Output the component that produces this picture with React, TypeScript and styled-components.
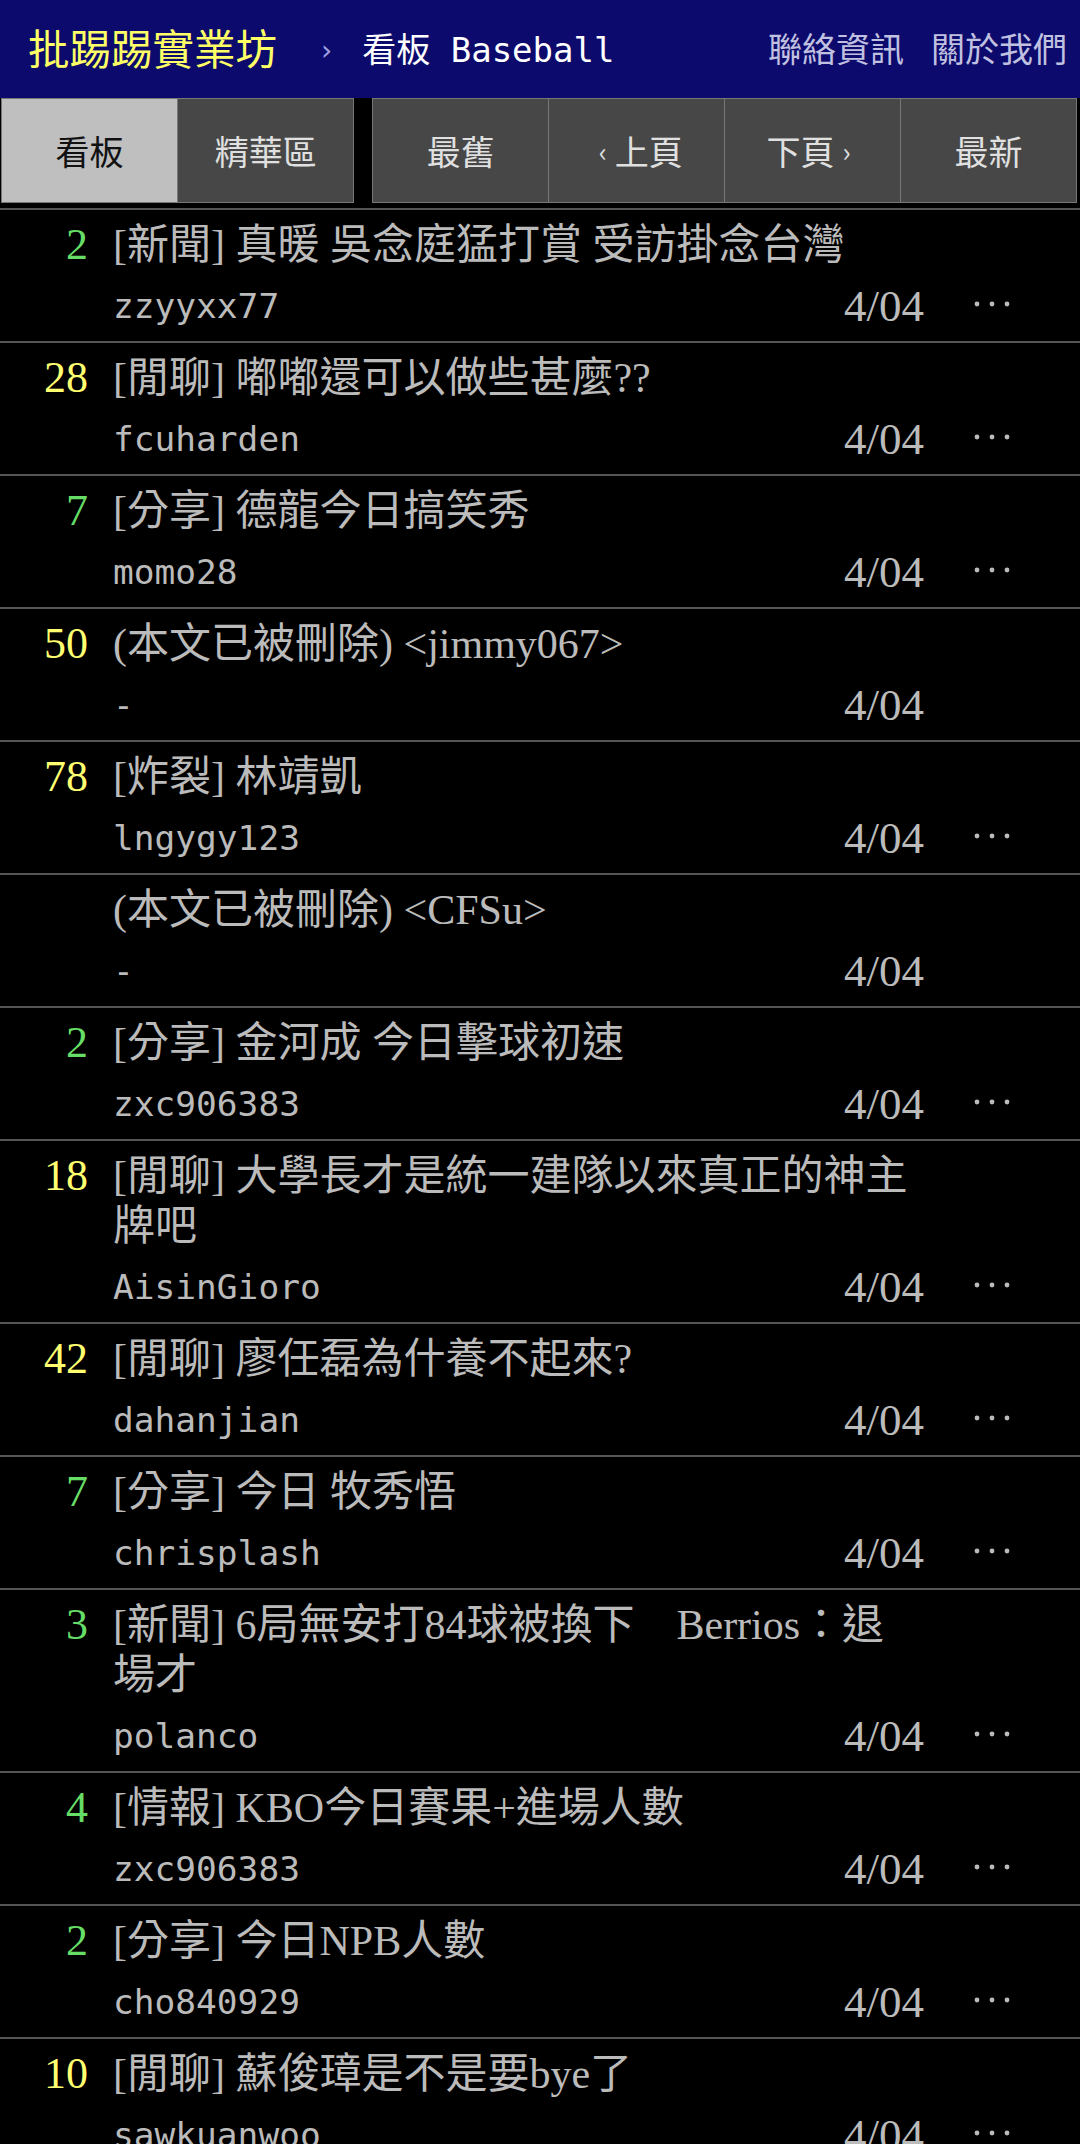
import React from "react";
import styled, { createGlobalStyle } from "styled-components";

const GlobalStyle = createGlobalStyle`
  html, body {
    margin: 0;
    padding: 0;
    background: #000;
  }
  body {
    font-family: "Liberation Serif", "Noto Sans CJK TC", serif;
    color: #bbb;
  }
  a { text-decoration: none; }
`;

const TopBar = styled.header`
  display: flex;
  align-items: center;
  height: 98px;
  padding: 0 13px 2px 28px;
  box-sizing: border-box;
  background: #0c0a6c;
`;

const SiteTitle = styled.a`
  font-family: "Noto Sans CJK TC", sans-serif;
  font-size: 41.5px;
  line-height: 1;
  color: #ffff66;
`;

const Caret = styled.span`
  font-family: "DejaVu Sans", sans-serif;
  font-size: 28px;
  color: #a0a0e0;
  margin-left: 44px;
  margin-top: 4px;
`;

const BoardName = styled.a`
  font-family: "DejaVu Sans Mono", "Noto Sans CJK TC", monospace;
  font-size: 34px;
  line-height: 1;
  color: #fff;
  margin-left: 30px;
  margin-top: 4px;
`;

const RightLinks = styled.nav`
  margin-left: auto;
  display: flex;
  gap: 27px;
`;

const TopLink = styled.a`
  font-family: "Noto Sans CJK TC", sans-serif;
  font-size: 34px;
  line-height: 1;
  color: #c0c0e0;
`;

const ActionBar = styled.div`
  display: flex;
  gap: 18px;
  height: 105px;
  padding: 0 3px 0 1px;
  margin-bottom: 5px;
`;

const BtnGroup = styled.div<{ $n: number }>`
  flex: ${(p) => p.$n};
  display: flex;
  border: 1px solid #777;
`;

const Btn = styled.a<{ $active?: boolean }>`
  flex: 1;
  display: flex;
  align-items: center;
  justify-content: center;
  background: ${(p) => (p.$active ? "#bfbfbf" : "#474747")};
  color: ${(p) => (p.$active ? "#111" : "#e0e0e0")};
  font-family: "Noto Sans CJK TC", sans-serif;
  font-size: 34px;
  & + & {
    border-left: 1px solid #777;
  }
`;

const Chev = styled.span`
  font-size: 27px;
  margin: 0 8px;
`;

const List = styled.div`
  border-top: 2px solid #555;
`;

const Entry = styled.div`
  display: grid;
  grid-template-columns: 88px 1fr;
  column-gap: 25px;
  padding: 10px 20px 10px 0;
  border-bottom: 2px solid #555;
`;

const Nrec = styled.div<{ $tone: "green" | "yellow" | "none" }>`
  font-size: 44px;
  line-height: 50px;
  text-align: right;
  color: ${(p) => (p.$tone === "green" ? "#66dd66" : p.$tone === "yellow" ? "#ffff70" : "transparent")};
`;

const EntryBody = styled.div`
  min-width: 0;
`;

const Title = styled.div`
  font-size: 42px;
  line-height: 50px;
  max-width: 805px;
  color: #bbb;
`;

const Meta = styled.div`
  display: flex;
  align-items: center;
  height: 50px;
  margin-top: 11px;
`;

const Author = styled.div`
  flex: 1;
  font-family: "DejaVu Sans Mono", monospace;
  font-size: 34.5px;
  color: #bbb;
`;

const DateCell = styled.div`
  font-size: 45px;
  color: #bbb;
`;

const More = styled.div`
  width: 136px;
  display: flex;
  justify-content: center;
  align-items: center;
  padding-bottom: 4px;
`;

type Row = {
  n: string;
  tone: "green" | "yellow" | "none";
  title: string;
  author: string;
  more: boolean;
};

const rows: Row[] = [
  { n: "2", tone: "green", title: "[新聞] 真暖 吳念庭猛打賞 受訪掛念台灣", author: "zzyyxx77", more: true },
  { n: "28", tone: "yellow", title: "[閒聊] 嘟嘟還可以做些甚麼??", author: "fcuharden", more: true },
  { n: "7", tone: "green", title: "[分享] 德龍今日搞笑秀", author: "momo28", more: true },
  { n: "50", tone: "yellow", title: "(本文已被刪除) <jimmy067>", author: "-", more: false },
  { n: "78", tone: "yellow", title: "[炸裂] 林靖凱", author: "lngygy123", more: true },
  { n: "", tone: "none", title: "(本文已被刪除) <CFSu>", author: "-", more: false },
  { n: "2", tone: "green", title: "[分享] 金河成 今日擊球初速", author: "zxc906383", more: true },
  { n: "18", tone: "yellow", title: "[閒聊] 大學長才是統一建隊以來真正的神主牌吧", author: "AisinGioro", more: true },
  { n: "42", tone: "yellow", title: "[閒聊] 廖任磊為什養不起來?", author: "dahanjian", more: true },
  { n: "7", tone: "green", title: "[分享] 今日 牧秀悟", author: "chrisplash", more: true },
  { n: "3", tone: "green", title: "[新聞] 6局無安打84球被換下　Berrios：退場才", author: "polanco", more: true },
  { n: "4", tone: "green", title: "[情報] KBO今日賽果+進場人數", author: "zxc906383", more: true },
  { n: "2", tone: "green", title: "[分享] 今日NPB人數", author: "cho840929", more: true },
  { n: "10", tone: "yellow", title: "[閒聊] 蘇俊璋是不是要bye了", author: "sawkuanwoo", more: true },
];

const Dots = () => (
  <svg width="36" height="6" viewBox="0 0 36 6" aria-hidden="true">
    <circle cx="3" cy="3" r="2.4" fill="#bbb" />
    <circle cx="18" cy="3" r="2.4" fill="#bbb" />
    <circle cx="33" cy="3" r="2.4" fill="#bbb" />
  </svg>
);

export default function App() {
  return (
    <>
      <GlobalStyle />
      <TopBar>
        <SiteTitle>批踢踢實業坊</SiteTitle>
        <Caret>›</Caret>
        <BoardName>看板 Baseball</BoardName>
        <RightLinks>
          <TopLink>聯絡資訊</TopLink>
          <TopLink>關於我們</TopLink>
        </RightLinks>
      </TopBar>
      <ActionBar>
        <BtnGroup $n={2}>
          <Btn $active>看板</Btn>
          <Btn>精華區</Btn>
        </BtnGroup>
        <BtnGroup $n={4}>
          <Btn>最舊</Btn>
          <Btn>
            <Chev>‹</Chev>上頁
          </Btn>
          <Btn>
            下頁<Chev>›</Chev>
          </Btn>
          <Btn>最新</Btn>
        </BtnGroup>
      </ActionBar>
      <List>
        {rows.map((r, i) => (
          <Entry key={i}>
            <Nrec $tone={r.tone}>{r.n}</Nrec>
            <EntryBody>
              <Title>{r.title}</Title>
              <Meta>
                <Author>{r.author}</Author>
                <DateCell>4/04</DateCell>
                <More>{r.more ? <Dots /> : null}</More>
              </Meta>
            </EntryBody>
          </Entry>
        ))}
      </List>
    </>
  );
}
